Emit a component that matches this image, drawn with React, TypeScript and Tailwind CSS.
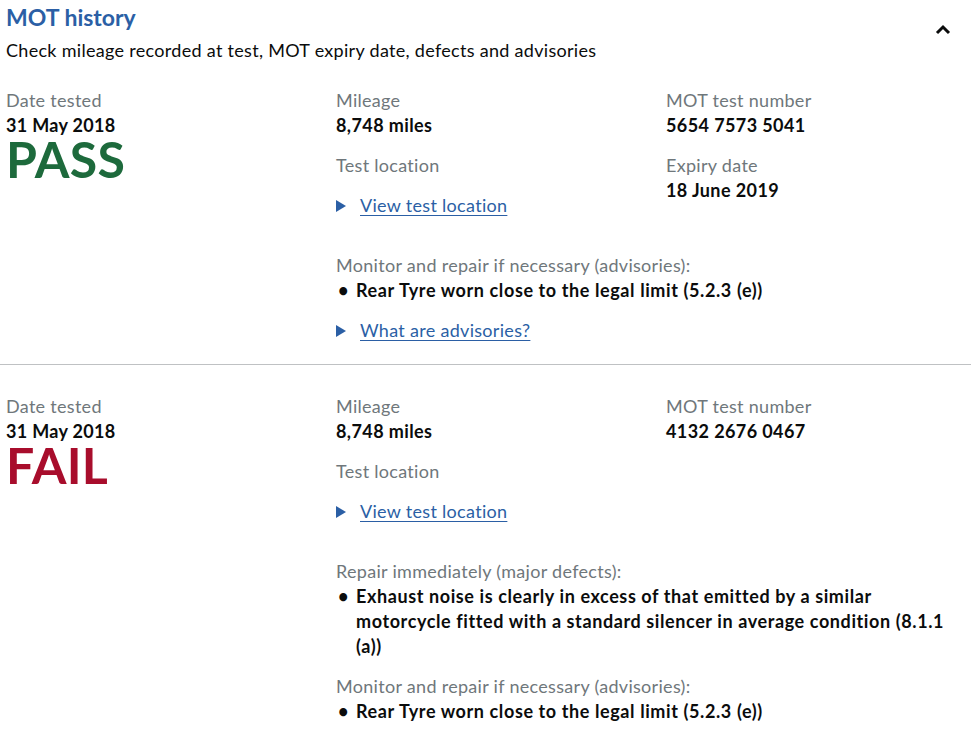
import React from 'react';

type Defect = { heading: string; items: string[] };

interface TestRecord {
  date: string;
  result: 'PASS' | 'FAIL';
  mileage: string;
  testNumber: string;
  expiry?: string;
  defects: Defect[];
  showAdvisoryHelp?: boolean;
}

const records: TestRecord[] = [
  {
    date: '31 May 2018',
    result: 'PASS',
    mileage: '8,748 miles',
    testNumber: '5654 7573 5041',
    expiry: '18 June 2019',
    defects: [
      {
        heading: 'Monitor and repair if necessary (advisories):',
        items: ['Rear Tyre worn close to the legal limit (5.2.3 (e))'],
      },
    ],
    showAdvisoryHelp: true,
  },
  {
    date: '31 May 2018',
    result: 'FAIL',
    mileage: '8,748 miles',
    testNumber: '4132 2676 0467',
    defects: [
      {
        heading: 'Repair immediately (major defects):',
        items: [
          'Exhaust noise is clearly in excess of that emitted by a similar motorcycle fitted with a standard silencer in average condition (8.1.1 (a))',
        ],
      },
      {
        heading: 'Monitor and repair if necessary (advisories):',
        items: ['Rear Tyre worn close to the legal limit (5.2.3 (e))'],
      },
    ],
  },
];

const Toggle = ({ label }: { label: string }) => (
  <div className="flex items-center">
    <svg className="mr-[14px]" width="10" height="12" viewBox="0 0 10 12">
      <path d="M0 0 L10 6 L0 12 Z" fill="#2b5fa5" />
    </svg>
    <a href="#" className="text-[#2b5fa5] underline underline-offset-[3px] decoration-1">
      {label}
    </a>
  </div>
);

const Value = ({ children }: { children: React.ReactNode }) => (
  <div className="font-bold tracking-[0.4px]">{children}</div>
);

const Record = ({ rec }: { rec: TestRecord }) => (
  <div className="flex pl-[6px]">
    {/* Colonne date + résultat */}
    <div className="w-[330px] shrink-0">
      <div className="text-[#6f777b]">Date tested</div>
      <div className="font-bold">{rec.date}</div>
      <div
        className={
          'text-[50px] leading-[42px] font-bold ' +
          (rec.result === 'PASS' ? 'text-[#1d6a3c]' : 'text-[#a80d2c]')
        }
      >
        {rec.result}
      </div>
    </div>

    <div className="flex-1 pr-[20px]">
      <div className="grid grid-cols-[330px_1fr]">
        <div>
          <div className="text-[#6f777b]">Mileage</div>
          <Value>{rec.mileage}</Value>
          <div className="mt-[15px] text-[#6f777b]">Test location</div>
          <div className="mt-[15px]">
            <Toggle label="View test location" />
          </div>
        </div>
        <div>
          <div className="text-[#6f777b]">MOT test number</div>
          <Value>{rec.testNumber}</Value>
          {rec.expiry && (
            <>
              <div className="mt-[15px] text-[#6f777b]">Expiry date</div>
              <Value>{rec.expiry}</Value>
            </>
          )}
        </div>
      </div>

      {/* Défauts et avertissements */}
      <div className="mt-[35px] flex flex-col gap-[15px]">
        {rec.defects.map((d) => (
          <div key={d.heading}>
            <div className="text-[#6f777b]">{d.heading}</div>
            <ul>
              {d.items.map((it) => (
                <li key={it} className="flex font-bold tracking-[0.6px]">
                  <span className="w-[20px] shrink-0 pl-[2px]">•</span>
                  <span>{it}</span>
                </li>
              ))}
            </ul>
          </div>
        ))}
      </div>
      {rec.showAdvisoryHelp && (
        <div className="mt-[15px]">
          <Toggle label="What are advisories?" />
        </div>
      )}
    </div>
  </div>
);

export default function App() {
  return (
    <div className="min-h-screen w-[971px] overflow-hidden bg-white text-[18px] leading-[25px] tracking-[0.3px] text-[#0b0c0c] font-['Lato',sans-serif]">
      <div className="relative pl-[6px] pt-[2px]">
        <h1 className="text-[23px] leading-[30px] font-bold tracking-normal text-[#2b5fa5]">MOT history</h1>
        <p className="mt-[6px]">Check mileage recorded at test, MOT expiry date, defects and advisories</p>
        <svg
          className="absolute right-[20px] top-[24px]"
          width="16"
          height="12"
          viewBox="0 0 16 12"
        >
          <path d="M2 9 L8 3 L14 9" fill="none" stroke="#0b0c0c" strokeWidth="3" />
        </svg>
      </div>

      <div className="mt-[25px]">
        <Record rec={records[0]} />
      </div>
      <div className="mt-[21px] border-t border-[#bfc1c3] pt-[29px]">
        <Record rec={records[1]} />
      </div>
    </div>
  );
}
